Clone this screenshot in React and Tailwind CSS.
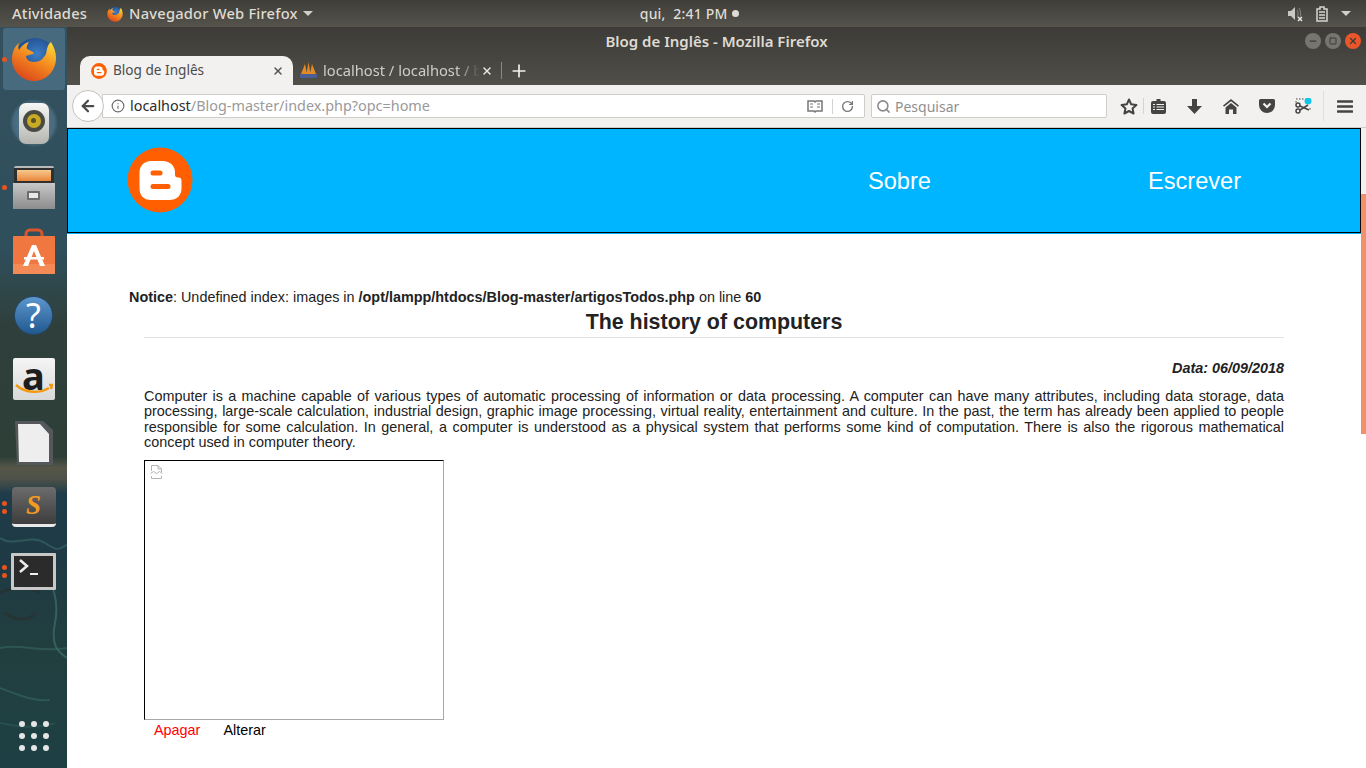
import { ArrowLeft, Info, RotateCw, Search, Plus, X, Minus, Square } from 'lucide-react'

const UI = { fontFamily: '"Noto Sans", sans-serif' }

// ─── Launcher icons ───────────────────────────────────────────
function FirefoxIcon({ size = 46 }) {
  return (
    <svg width={size} height={size} viewBox="0 0 46 46">
      <defs>
        <radialGradient id="ffBlue" cx="0.55" cy="0.4" r="0.6">
          <stop offset="0" stopColor="#3f7fc4" />
          <stop offset="1" stopColor="#173f82" />
        </radialGradient>
        <linearGradient id="ffOrange" x1="0.8" y1="0" x2="0.2" y2="1">
          <stop offset="0" stopColor="#fbd535" />
          <stop offset="0.45" stopColor="#f58a1f" />
          <stop offset="1" stopColor="#d9401c" />
        </linearGradient>
      </defs>
      <circle cx="24" cy="22" r="20" fill="url(#ffBlue)" />
      <path d="M40 6c3 5 5 10 5 16 0 13-10 23-22 23S1 35 1 23C1 16 4 10 8 7c-1 3-1 5 0 7 2-4 6-7 10-8-2 3-3 5-2 7 2 1 5 2 7 4-2 2-7 2-8 3 0 3 3 6 8 6 6 0 9-3 12-8 1-4 1-9 5-12z" fill="url(#ffOrange)" />
    </svg>
  )
}

function SpeakerIcon() {
  return (
    <div className="relative w-[48px] h-[48px] flex items-center justify-center rounded-full bg-[radial-gradient(circle,#5d7f92_0%,#486a7e_60%,transparent_72%)]">
      <div className="w-[30px] h-[41px] rounded-[7px] bg-gradient-to-b from-[#f7f7f5] to-[#b4b4b0] flex items-start justify-center pt-[7px]">
        <div className="w-[22px] h-[22px] rounded-full bg-[#4a4a44] flex items-center justify-center">
          <div className="w-[14px] h-[14px] rounded-full bg-[#c9aa25] flex items-center justify-center">
            <div className="w-[5px] h-[5px] rounded-full bg-[#5a5126]" />
          </div>
        </div>
      </div>
    </div>
  )
}

function FilesIcon() {
  return (
    <div className="w-[42px] h-[43px] flex flex-col">
      <div className="h-[17px] mx-[1px] rounded-t-[2px] bg-[#2f2f2f] border-t-2 border-[#b9b9b9] px-[3px] pt-[2px]">
        <div className="h-[11px] bg-gradient-to-b from-[#f6c98c] to-[#e8853a]" />
      </div>
      <div className="flex-1 bg-gradient-to-b from-[#c8c8c8] to-[#8d8d8d] flex items-center justify-center">
        <div className="w-[13px] h-[9px] rounded-[1px] border-2 border-[#6d6d6d] bg-[#e9e9e9]" />
      </div>
    </div>
  )
}

function ShopIcon() {
  return (
    <svg width="42" height="46" viewBox="0 0 42 46">
      <path d="M13 11V6a4 4 0 0 1 4-4h8a4 4 0 0 1 4 4v5" fill="none" stroke="#d9562a" strokeWidth="3" />
      <rect x="0" y="8" width="42" height="38" rx="1" fill="#f0773f" />
      <rect x="0" y="36" width="42" height="10" fill="#f48a55" />
      <path d="M19 17h4l9 21h-5l-6-15-6 15h-5z" fill="#fff" />
      <rect x="11" y="29" width="20" height="2.500" fill="#fff" />
    </svg>
  )
}

function HelpIcon() {
  return (
    <div className="w-[39px] h-[39px] rounded-full bg-gradient-to-b from-[#5d97ce] to-[#20598f] border border-[#24496b] flex items-center justify-center text-white text-[34px] leading-none" style={UI}>?</div>
  )
}

function AmazonIcon() {
  return (
    <div className="w-[42px] h-[42px] rounded-[2px] bg-gradient-to-b from-[#f5f5f5] to-[#d8d8d8] flex flex-col items-center relative">
      <span className="text-[#1d1d1d] text-[38px] leading-[34px] font-bold" style={UI}>a</span>
      <svg className="absolute left-[2px] top-[25px]" width="38" height="12" viewBox="0 0 38 12">
        <path d="M1 2c9 8 23 9 33 3M34 2l3 0-1 4" fill="none" stroke="#f39a12" strokeWidth="2.500" />
      </svg>
    </div>
  )
}

function LibreIcon() {
  return (
    <svg width="40" height="46" viewBox="0 0 40 46">
      <path d="M1 1h28l10 9v35H3z" fill="#55585a" />
      <path d="M4 4h22l9 10v28H5z" fill="#eeeeee" />
    </svg>
  )
}

function SublimeIcon() {
  return (
    <div className="w-[44px] h-[40px] rounded-[4px] border-b-[3px] border-[#e9e9e9] bg-gradient-to-b from-[#6c6c6c] to-[#3d3d3d] flex items-center justify-center text-[#f49a22] text-[27px] italic font-bold leading-none" style={{ fontFamily: '"Liberation Serif", serif' }}>S</div>
  )
}

function TerminalIcon() {
  return (
    <div className="w-[45px] h-[37px] rounded-[1px] border-[3px] border-[#c8c8c8] bg-[#2b2b2b] relative">
      <svg width="28" height="18" viewBox="0 0 28 18" className="absolute left-[3px] top-[2px]">
        <path d="M3 2l7 6-7 6" fill="none" stroke="#eee" strokeWidth="2.500" />
        <rect x="13" y="15" width="8" height="2" fill="#eee" />
      </svg>
    </div>
  )
}

function LauncherItem({ dots = 0, active, children }) {
  return (
    <div className={`relative w-[62px] h-[62px] mx-auto rounded-[3px] flex items-center justify-center ${active ? 'bg-[#486a7e]' : ''}`}>
      {dots > 0 && (
        <div className="absolute left-[-1px] top-0 bottom-0 flex flex-col justify-center gap-[3px]">
          {Array.from({ length: dots }).map((_, i) => (
            <span key={i} className="block w-[5px] h-[5px] rounded-full bg-[#e8541e]" />
          ))}
        </div>
      )}
      {children}
    </div>
  )
}

function WaterStreaks() {
  return (
    <svg className="absolute left-0 bottom-0" width="67" height="300" viewBox="0 0 67 300" fill="none">
      <path d="M0 70c15 10 30-5 45 5s15 5 22 2" stroke="#3b6a66" strokeWidth="2" opacity="0.6" />
      <path d="M45 95c5 20 15 35 10 60s5 30 12 35" stroke="#3f7a72" strokeWidth="2" opacity="0.6" />
      <path d="M0 125c15-8 30-6 40 0M5 145c10 8 25 8 30 0" stroke="#2a2f2c" strokeWidth="3" opacity="0.6" />
      <path d="M0 180c20-5 40 5 67 0M0 220c15 6 35 14 50 12" stroke="#3a6e68" strokeWidth="2" opacity="0.5" />
      <path d="M0 255c20 4 35 6 55 0" stroke="#2f5f5a" strokeWidth="2" opacity="0.5" />
    </svg>
  )
}

function Launcher() {
  const dots = Array.from({ length: 9 })
  return (
    <aside className="w-[67px] shrink-0 flex flex-col items-center pt-[1px] bg-[linear-gradient(to_bottom,#34505f_0%,#2f4f5c_30%,#2f403c_40%,#2e3f38_58%,#565648_59.5%,#4d5148_61%,#1e3c4a_63%,#1f3a44_72%,#223f3f_85%,#1d4044_100%)] relative">
      <WaterStreaks />
      <div className="relative flex flex-col gap-[2px] w-full">
        <LauncherItem dots={1} active><FirefoxIcon /></LauncherItem>
        <LauncherItem><SpeakerIcon /></LauncherItem>
        <LauncherItem dots={1}><FilesIcon /></LauncherItem>
        <LauncherItem><ShopIcon /></LauncherItem>
        <LauncherItem><HelpIcon /></LauncherItem>
        <LauncherItem><AmazonIcon /></LauncherItem>
        <LauncherItem><LibreIcon /></LauncherItem>
        <LauncherItem dots={2}><SublimeIcon /></LauncherItem>
        <LauncherItem dots={2}><TerminalIcon /></LauncherItem>
      </div>
      <div className="relative mt-auto mb-[17px] grid grid-cols-3 gap-[6px]">
        {dots.map((_, i) => <span key={i} className="w-[6px] h-[6px] rounded-full bg-[#e6e6e6]" />)}
      </div>
    </aside>
  )
}

// ─── Ubuntu top panel ─────────────────────────────────────────
function Caret({ className = '' }) {
  return <span className={`inline-block w-0 h-0 border-x-[5px] border-x-transparent border-t-[5px] border-t-[#d0cfca] ${className}`} />
}

function TopPanel() {
  return (
    <header className="h-[27px] shrink-0 flex items-center bg-gradient-to-b from-[#3f3e39] to-[#55534c] text-[#dfdbd2] text-[14.700px] font-medium tracking-[0.2px]" style={UI}>
      <span className="ml-[12px]">Atividades</span>
      <span className="ml-[20px]"><FirefoxIcon size={16} /></span>
      <span className="ml-[6px]">Navegador Web Firefox</span>
      <Caret className="ml-[5px]" />
      <div className="ml-[327px] flex items-center text-[14px]">
        <span>qui,&nbsp; 2:41 PM</span>
        <span className="ml-[4px] w-[7px] h-[7px] rounded-full bg-[#dfdbd2]" />
      </div>
      <div className="ml-auto flex items-center pr-[15px]">
        <svg width="16" height="16" viewBox="0 0 16 16">
          <path d="M1 5h3l4-4v13l-4-4H1z" fill="#c9c8c3" />
          <path d="M10 4c1.500 2 1.500 5 0 7M12 2c2 3 2 7 1 9" fill="none" stroke="#8a8983" />
          <path d="M11 11l4 4M15 11l-4 4" stroke="#e6e6e6" strokeWidth="1.500" />
        </svg>
        <svg width="12" height="16" viewBox="0 0 12 16" className="ml-[13px]">
          <path d="M4 1h4v2h3v12H1V3h3z" fill="none" stroke="#d6d5d0" strokeWidth="1.500" />
          <path d="M3 6h6M3 9h6M3 12h6" stroke="#d6d5d0" strokeWidth="1.500" />
        </svg>
        <Caret className="ml-[13px]" />
      </div>
    </header>
  )
}

// ─── Firefox chrome ───────────────────────────────────────────
function BloggerLogo({ size }) {
  return (
    <svg width={size} height={size} viewBox="0 0 66 66">
      <circle cx="33" cy="33" r="32.500" fill="#ff5f00" />
      <path d="M24 14h12c7 0 12 5 12 11v3c0 1.500 1 2.500 3 2.500 3 0 3.500 1.500 3.500 3v8c0 7-5 11.500-12 11.500H24c-7 0-11.500-4.500-11.500-11.500V25.500C12.500 19 17 14 24 14z" fill="#fff" />
      <rect x="23.500" y="23.500" width="12" height="5" rx="2.500" fill="#ff5f00" />
      <rect x="23.500" y="37" width="20" height="5" rx="2.500" fill="#ff5f00" />
    </svg>
  )
}

function PmaLogo() {
  return (
    <svg width="17" height="17" viewBox="0 0 17 17">
      <path d="M1 12L5 2l2 10zM6.500 12L8.500 0l2 12zM10 12l2-10 4 10z" fill="#e68a22" />
      <rect x="0" y="12" width="17" height="4" fill="#4b5f94" />
    </svg>
  )
}

function TitleBar() {
  return (
    <div className="h-[58px] shrink-0 flex flex-col bg-gradient-to-b from-[#3c3b37] to-[#514f49]" style={UI}>
      <div className="h-[28px] flex items-center relative">
        <span className="flex-1 text-center text-[#dfdbd2] text-[15px] font-semibold">Blog de Inglês - Mozilla Firefox</span>
        <div className="absolute right-[5px] top-[6px] flex items-center gap-[4px]">
          <span className="w-[16px] h-[16px] rounded-full bg-[#77756f] flex items-center justify-center"><Minus size={10} color="#3c3b37" strokeWidth={3} /></span>
          <span className="w-[16px] h-[16px] rounded-full bg-[#77756f] flex items-center justify-center"><Square size={8} color="#3c3b37" strokeWidth={3} /></span>
          <span className="w-[16px] h-[16px] rounded-full bg-[#e9562a] flex items-center justify-center"><X size={10} color="#3c3b37" strokeWidth={3} /></span>
        </div>
      </div>
      <div className="flex-1 flex items-end pl-[13px]">
        <div className="w-[213px] h-[29px] rounded-t-[10px] bg-[#f2f1ef] flex items-center pl-[11px] pr-[9px] text-[#4c4c4c] text-[13.600px]">
          <BloggerLogo size={16} />
          <span className="ml-[6px] flex-1">Blog de Inglês</span>
          <X size={12} strokeWidth={3} color="#555" />
        </div>
        <div className="h-[29px] flex items-center pl-[7px] text-[#cfcdc8] text-[14.700px]">
          <PmaLogo />
          <span className="ml-[6px] w-[157px] overflow-hidden whitespace-nowrap [mask-image:linear-gradient(to_right,black_85%,transparent)]">localhost / localhost / b</span>
          <X size={12} strokeWidth={3} color="#e6e6e6" className="ml-[1px]" />
          <span className="ml-[8px] w-px h-[17px] bg-[#8b8984]" />
          <Plus size={20} color="#f2f1ef" strokeWidth={2} className="ml-[7px]" />
        </div>
      </div>
    </div>
  )
}

function PanelIcons() {
  const ink = '#444444'
  return (
    <div className="flex items-center ml-[13px]">
      <svg width="18" height="17" viewBox="0 0 18 17">
        <path d="M9 1.500l2.200 4.800 5.200.6-3.900 3.500 1.100 5.100L9 13l-4.600 2.500 1.100-5.100L1.600 6.900l5.200-.6z" fill="none" stroke={ink} strokeWidth="2" strokeLinejoin="round" />
      </svg>
      <span className="ml-[5px] w-px h-[16px] bg-[#d5d3cf]" />
      <svg width="15" height="15" viewBox="0 0 15 15" className="ml-[7px]">
        <path d="M5.500 0h4v2H13a2 2 0 0 1 2 2v9a2 2 0 0 1-2 2H2a2 2 0 0 1-2-2V4a2 2 0 0 1 2-2h3.500z" fill={ink} />
        <path d="M2 5.500h2M5.500 5.500H13M2 8h2M5.500 8H13M2 10.500h2M5.500 10.500H13" stroke="#f2f1ef" strokeWidth="1.100" />
      </svg>
      <svg width="15" height="15" viewBox="0 0 15 15" className="ml-[21px]">
        <path d="M5 0h5v7h5l-7.500 8L0 7h5z" fill={ink} />
      </svg>
      <svg width="16" height="15" viewBox="0 0 16 15" className="ml-[21px]">
        <path d="M8 0l8 6.500-1 1.300L8 2.200 1 7.800 0 6.500z" fill={ink} />
        <path d="M8 4l5.500 4.500V15H10v-4.500H6V15H2.500V8.500z" fill={ink} />
      </svg>
      <svg width="16" height="14" viewBox="0 0 16 14" className="ml-[20px]">
        <path d="M1.500 0h13A1.500 1.500 0 0 1 16 1.500V6a8 8 0 0 1-16 0V1.500A1.500 1.500 0 0 1 1.500 0z" fill={ink} />
        <path d="M4.500 4.500L8 8l3.500-3.500" fill="none" stroke="#f2f1ef" strokeWidth="2.200" />
      </svg>
      <svg width="17" height="16" viewBox="0 0 17 16" className="ml-[20px]">
        <path d="M1 1h9" stroke={ink} strokeDasharray="1.500 1.500" />
        <path d="M15 10v2M1 3v2" stroke={ink} strokeDasharray="1.500 1.500" />
        <circle cx="3" cy="13" r="2" fill="none" stroke={ink} strokeWidth="1.500" />
        <circle cx="3" cy="7" r="2" fill="none" stroke={ink} strokeWidth="1.500" />
        <path d="M5 8l9 4M5 12l8-5" stroke={ink} strokeWidth="1.500" />
        <circle cx="13" cy="3" r="3.500" fill="#12c5e8" />
      </svg>
      <span className="ml-[11px] w-px h-[30px] bg-[#e0dfdb]" />
      <svg width="16" height="13" viewBox="0 0 16 13" className="ml-[13px]">
        <path d="M1 1.500h14M1 6.500h14M1 11.500h14" stroke={ink} strokeWidth="2.600" strokeLinecap="round" />
      </svg>
    </div>
  )
}

function Toolbar() {
  return (
    <div className="h-[43px] shrink-0 flex items-center bg-[#f2f1ef] border-b border-[#cfcdc9] pl-[5px]" style={UI}>
      <div className="relative z-10 w-[32px] h-[32px] rounded-full border border-[#c4c2bd] bg-white flex items-center justify-center">
        <ArrowLeft size={18} color="#4a4a48" strokeWidth={3} />
      </div>
      <div className="-ml-[2px] w-[763px] h-[24px] bg-white border border-[#cfcdc9] rounded-r-[2px] flex items-center pl-[8px] text-[14.400px]">
        <Info size={14} color="#6e6e6e" />
        <span className="ml-[5px] text-[#2b2b2b]">localhost</span>
        <span className="text-[#9a9a9a]">/Blog-master/index.php?opc=home</span>
        <div className="ml-auto flex items-center">
          <svg width="16" height="13" viewBox="0 0 16 13">
            <path d="M1 1h6l1 1 1-1h6v10H9l-1 1-1-1H1z" fill="none" stroke="#777" strokeWidth="1.500" />
            <path d="M3 4h3M3 7h3M10 4h3M10 7h3" stroke="#777" />
          </svg>
          <span className="ml-[9px] w-px h-[15px] bg-[#d5d3cf]" />
          <RotateCw size={13} color="#777" strokeWidth={2.500} className="ml-[8px] mr-[10px]" />
        </div>
      </div>
      <div className="ml-[6px] w-[236px] h-[24px] bg-white border border-[#cfcdc9] rounded-[2px] flex items-center pl-[4px] text-[14px] text-[#8f8f8f]">
        <Search size={15} color="#8b8b8b" strokeWidth={2.500} />
        <span className="ml-[4px]">Pesquisar</span>
      </div>
      <PanelIcons />
    </div>
  )
}

// ─── Page content ─────────────────────────────────────────────
function BrokenImage() {
  return (
    <svg width="13" height="15" viewBox="0 0 13 15" className="block">
      <path d="M1.500 7V1.500h6.500l3.500 3.500v3M1.500 12v2.500h10v-2.500M8 1.500V5h3.500" fill="none" stroke="#b4b4b4" />
      <path d="M0.500 9.500l3-2 3 2 3-2 3 2" fill="none" stroke="#b4b4b4" />
    </svg>
  )
}

function Page() {
  return (
    <main className="flex-1 min-w-0 flex bg-white" style={{ fontFamily: '"Liberation Sans", Arial, sans-serif' }}>
      <div className="flex-1 min-w-0 flex flex-col">
        <div className="bg-[#00b5ff] pb-px">
          <nav className="h-[105px] border border-black bg-[#00b5ff] flex items-center text-white text-[23.600px]">
            <div className="ml-[59px] mb-[2px]"><BloggerLogo size={66} /></div>
            <span className="ml-[675px] mt-[2px]">Sobre</span>
            <span className="ml-[217px] mt-[2px]">Escrever</span>
          </nav>
        </div>
        <div className="pt-[55px] pl-[62px] text-[14.400px] leading-[16px] text-[#222]">
          <b>Notice</b>: Undefined index: images in <b>/opt/lampp/htdocs/Blog-master/artigosTodos.php</b> on line <b>60</b>
        </div>
        <article className="ml-[77px] w-[1140px] text-[#222]">
          <h1 className="text-center text-[21.400px] leading-[25px] font-bold pt-[5px] pb-[2px] border-b border-[#e2e2e2]">The history of computers</h1>
          <p className="text-right text-[14.400px] leading-[16px] font-bold italic mt-[22px]">Data: 06/09/2018</p>
          <p className="text-[14.400px] leading-[15.400px] text-justify mt-[13px]">
            Computer is a machine capable of various types of automatic processing of information or data processing. A computer can have many attributes, including data storage, data processing, large-scale calculation, industrial design, graphic image processing, virtual reality, entertainment and culture. In the past, the term has already been applied to people responsible for some calculation. In general, a computer is understood as a physical system that performs some kind of computation. There is also the rigorous mathematical concept used in computer theory.
          </p>
          <div className="mt-[9px] w-[300px] h-[260px] border border-t-black border-l-black border-r-[#a9a9a9] border-b-[#a9a9a9] pl-[5px] pt-[3px]">
            <BrokenImage />
          </div>
          <div className="mt-[2px] flex text-[14.400px] leading-[16px] pl-[10px]">
            <span className="text-[#ff0000]">Apagar</span>
            <span className="ml-[23px] text-black">Alterar</span>
          </div>
        </article>
      </div>
      <div className="w-[5px] shrink-0 flex flex-col bg-white">
        <div className="h-[66px] bg-[#f2f1ef]" />
        <div className="h-[240px] bg-[#f0916b]" />
      </div>
    </main>
  )
}

export default function App() {
  return (
    <div className="w-[1366px] h-[768px] overflow-hidden flex flex-col">
      <TopPanel />
      <div className="flex-1 min-h-0 flex">
        <Launcher />
        <div className="flex-1 min-w-0 flex flex-col">
          <TitleBar />
          <Toolbar />
          <Page />
        </div>
      </div>
    </div>
  )
}
